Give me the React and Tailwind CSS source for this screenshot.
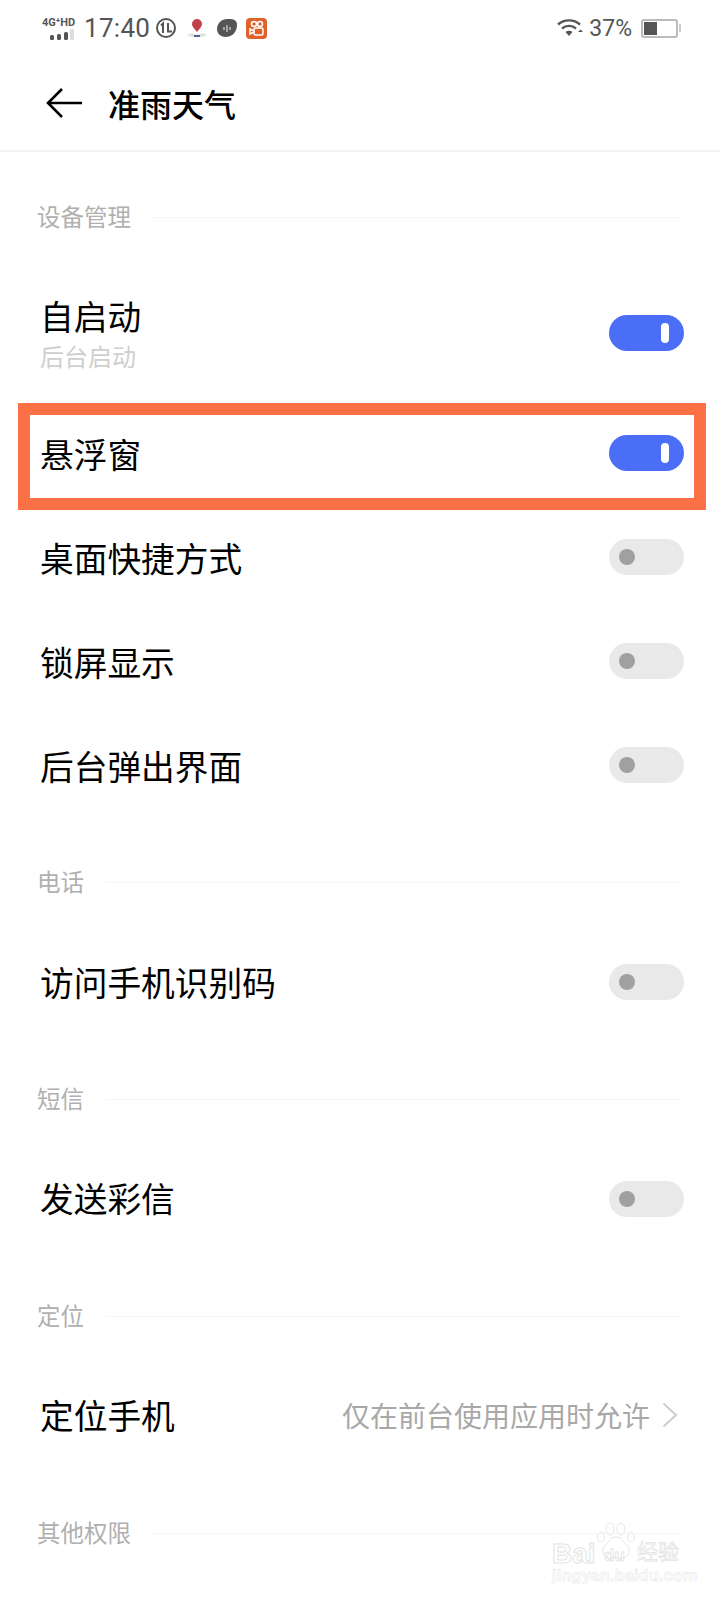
const font = { fontFamily: '"Noto Sans CJK SC", "Noto Sans", sans-serif' };

function Toggle({ on }) {
  if (on) {
    return (
      <div className="flex h-[36px] w-[75px] shrink-0 items-center justify-end rounded-full bg-[#4a6ff6] pr-[15px]">
        <div className="h-[20px] w-[8px] rounded-full bg-white" />
      </div>
    );
  }
  return (
    <div className="flex h-[36px] w-[75px] shrink-0 items-center rounded-full bg-[#e9e9e9] pl-[10px]">
      <div className="h-[16px] w-[16px] rounded-full bg-[#a0a0a0]" />
    </div>
  );
}

function SectionHead({ title }) {
  return (
    <div className="flex h-[44px] items-center gap-[21px] pl-[37px] pr-[39px]">
      <span className="text-[23.500px] text-[#b0b0b0]">{title}</span>
      <div className="h-px flex-1 bg-[#f6f6f6]" />
    </div>
  );
}

function Row({ label, on, toggleClass = '' }) {
  return (
    <div className="flex h-[104px] items-center justify-between pl-[40px] pr-[36px]">
      <span className="text-[33.700px] leading-[44px] text-black">{label}</span>
      <div className={toggleClass}>
        <Toggle on={on} />
      </div>
    </div>
  );
}

function StatusBar() {
  return (
    <div className="flex h-[56px] items-center justify-between pl-[42px] pr-[39px] text-[#555]">
      <div className="flex items-center">
        <div className="flex w-[36px] flex-col items-start">
          <span className="text-[11px] font-bold leading-[13px]" style={{ fontFamily: 'Roboto, sans-serif' }}>
            4G⁺HD
          </span>
          <svg width="26" height="12" viewBox="0 0 26 12" className="ml-[7px]">
            <rect x="1" y="6" width="4" height="5" rx="1.500" fill="#555" />
            <rect x="8" y="5" width="4" height="6" rx="1.500" fill="#555" />
            <rect x="15" y="3" width="4" height="8" rx="1.500" fill="#555" />
            <rect x="21" y="0" width="4" height="11" rx="1.500" fill="#ddd" />
          </svg>
        </div>
        <span className="ml-[6px] text-[26px] leading-none tracking-[0.3px]" style={{ fontFamily: 'Roboto, sans-serif' }}>
          17:40
        </span>
        <svg width="22" height="22" viewBox="0 0 22 22" className="ml-[5px]">
          <circle cx="11" cy="11" r="9" fill="none" stroke="#555" strokeWidth="2" />
          <path d="M8 16V6.500L6 8.500M13 6v8.500h4" fill="none" stroke="#555" strokeWidth="2" />
        </svg>
        <svg width="24" height="24" viewBox="0 0 24 24" className="ml-[8px]">
          <path d="M2 19l5-2 5 2 6-2 4 2-5 2H7z" fill="#dbe8d6" />
          <path d="M12 3a5 5 0 0 1 5 5c0 3-3 5-5 8-2-3-5-5-5-8a5 5 0 0 1 5-5z" fill="#c2404a" />
          <rect x="9" y="19" width="6" height="2" fill="#5b5ea6" />
        </svg>
        <svg width="22" height="22" viewBox="0 0 22 22" className="ml-[7px]">
          <path d="M11 2c5 0 10 0 10 6 0 7-5 12-11 12C5 20 1 17 1 12 1 6 6 2 11 2z" fill="#555" />
          <path d="M8 10v3M11 8v7M14 10v3" stroke="#ddd" strokeWidth="1.200" />
        </svg>
        <svg width="21" height="21" viewBox="0 0 21 21" className="ml-[8px]">
          <rect width="21" height="21" rx="4" fill="#e0622a" />
          <circle cx="8" cy="6" r="2.500" fill="none" stroke="#fff" strokeWidth="1.500" />
          <circle cx="14" cy="6" r="2.500" fill="none" stroke="#fff" strokeWidth="1.500" />
          <rect x="8" y="10" width="9" height="7" rx="1.500" fill="none" stroke="#fff" strokeWidth="1.500" />
          <path d="M8 13l-4-2v5l4-2" fill="none" stroke="#fff" strokeWidth="1.500" />
        </svg>
      </div>
      <div className="flex items-center">
        <svg width="26" height="20" viewBox="0 0 26 20">
          <path d="M1 6.500C7 1 17 1 23 6.500" fill="none" stroke="#555" strokeWidth="2.400" />
          <path d="M5 10.500c4-3.500 10-3.500 14 0" fill="none" stroke="#555" strokeWidth="2.400" />
          <path d="M8.500 14c2-1.700 5-1.700 7 0L12 18z" fill="#555" />
          <path d="M21 14l2.500-2.500L26 14z" fill="#555" />
        </svg>
        <span className="ml-[6px] text-[23px] leading-none" style={{ fontFamily: 'Roboto, sans-serif' }}>
          37%
        </span>
        <div className="ml-[9px] flex items-center">
          <div className="h-[19px] w-[37px] rounded-[3px] border-2 border-[#bbb] p-px">
            <div className="h-full w-[13px] bg-[#555]" />
          </div>
          <div className="ml-px h-[8px] w-[2px] bg-[#ccc]" />
        </div>
      </div>
    </div>
  );
}

function Watermark() {
  return (
    <div className="absolute left-[552px] top-[1522px] h-[62px] w-[130px]" style={{ fontFamily: '"Liberation Sans", sans-serif' }}>
      <svg width="40" height="40" viewBox="0 0 40 40" className="absolute left-[44px] top-0" fill="none" stroke="#e6e6e6" strokeWidth="1">
        <ellipse cx="5" cy="15" rx="3.500" ry="5" />
        <ellipse cx="14" cy="7" rx="4" ry="6" />
        <ellipse cx="25" cy="7" rx="4" ry="6" />
        <ellipse cx="35" cy="15" rx="3.500" ry="5" />
        <path d="M20 15c6 0 7 5 11 8 4 4 2 14-6 13-3 0-7-1-10 0-8 1-10-8-6-13 4-3 5-8 11-8z" />
      </svg>
      <span className="absolute left-0 top-[18px] text-[28px] font-bold leading-none text-transparent [-webkit-text-stroke:1px_#e4e4e4]">
        Bai
      </span>
      <span className="absolute left-[52px] top-[25px] text-[17px] font-bold leading-none text-transparent [-webkit-text-stroke:0.8px_#e4e4e4]">
        du
      </span>
      <span className="absolute left-[85px] top-[18px] text-[21px] leading-none text-transparent [-webkit-text-stroke:0.8px_#e4e4e4]" style={font}>
        经验
      </span>
      <span className="absolute left-0 top-[46px] text-[16px] font-bold leading-none tracking-[0.3px] text-transparent [-webkit-text-stroke:0.6px_#e8e8e8]">
        jingyan.baidu.com
      </span>
    </div>
  );
}

export default function App() {
  return (
    <div className="relative h-[1600px] w-[720px] overflow-hidden bg-white" style={font}>
      <StatusBar />
      <div className="flex h-[96px] items-center border-b-2 border-[#f4f4f4] pl-[46px]">
        <svg width="37" height="32" viewBox="0 0 37 32" fill="none" stroke="#000" strokeWidth="2.600">
          <path d="M36 16H2M16 2L2 16l14 14" />
        </svg>
        <span className="ml-[25px] text-[32px] font-medium leading-none text-black">准雨天气</span>
      </div>

      <div className="mt-[43px]">
        <SectionHead title="设备管理" />
        <div className="mt-[41px] flex h-[104px] items-center justify-between pl-[40px] pr-[36px]">
          <div className="flex flex-col">
            <span className="text-[33.700px] leading-[44px] text-black">自启动</span>
            <span className="mt-[3px] text-[24px] leading-[30px] text-[#cfcfcf]">后台启动</span>
          </div>
          <div className="translate-y-[1px]">
            <Toggle on />
          </div>
        </div>
        <div className="relative mt-[18px]">
          <div className="absolute bottom-[-4px] left-[18px] right-[14px] top-[1px] border-[12px] border-[#fb7145]" />
          <Row label="悬浮窗" on toggleClass="-translate-y-[1px]" />
        </div>
        <Row label="桌面快捷方式" toggleClass="-translate-y-[1px]" />
        <Row label="锁屏显示" toggleClass="-translate-y-[1px]" />
        <Row label="后台弹出界面" toggleClass="-translate-y-[1px]" />
      </div>

      <div className="mt-[42px]">
        <SectionHead title="电话" />
        <div className="mt-[26px]">
          <Row label="访问手机识别码" />
        </div>
      </div>

      <div className="mt-[43px]">
        <SectionHead title="短信" />
        <div className="mt-[25px]">
          <Row label="发送彩信" toggleClass="translate-y-[1px]" />
        </div>
      </div>

      <div className="mt-[44px]">
        <SectionHead title="定位" />
        <div className="mt-[25px] flex h-[104px] items-center justify-between pl-[40px] pr-[42px]">
          <span className="text-[33.700px] leading-[44px] text-black">定位手机</span>
          <div className="flex items-center">
            <span className="text-[28px] leading-none text-[#a8a8a8]">仅在前台使用应用时允许</span>
            <svg width="16" height="26" viewBox="0 0 16 26" className="ml-[12px]">
              <path d="M1.500 1.500L14 13 1.500 24.500" fill="none" stroke="#cdcdcd" strokeWidth="2" />
            </svg>
          </div>
        </div>
      </div>

      <div className="mt-[44px]">
        <SectionHead title="其他权限" />
      </div>

      <Watermark />
    </div>
  );
}
